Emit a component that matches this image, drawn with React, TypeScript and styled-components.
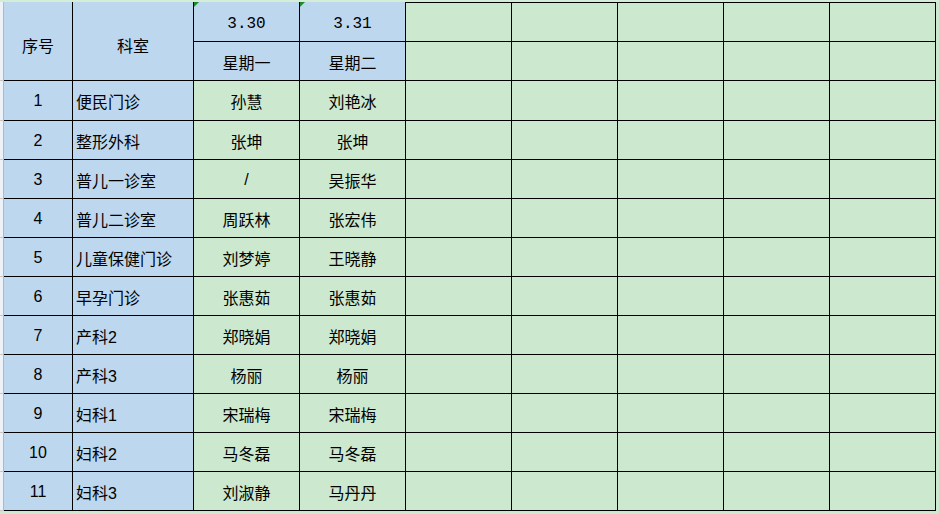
import { createGlobalStyle } from "styled-components";
import styled from "styled-components";

const GlobalStyle = createGlobalStyle`
  html, body {
    margin: 0;
    padding: 0;
    background: #cce8cf;
  }
  body {
    width: 939px;
    height: 514px;
    overflow: hidden;
    font-family: "Liberation Sans", "Noto Sans CJK SC", sans-serif;
    color: #000;
  }
`;

const BLUE = "#bdd7ee";
const GREEN = "#cce8cf";

const rows = [
  { no: "1", dept: "便民门诊", d1: "孙慧", d2: "刘艳冰" },
  { no: "2", dept: "整形外科", d1: "张坤", d2: "张坤" },
  { no: "3", dept: "普儿一诊室", d1: "/", d2: "吴振华" },
  { no: "4", dept: "普儿二诊室", d1: "周跃林", d2: "张宏伟" },
  { no: "5", dept: "儿童保健门诊", d1: "刘梦婷", d2: "王晓静" },
  { no: "6", dept: "早孕门诊", d1: "张惠茹", d2: "张惠茹" },
  { no: "7", dept: "产科2", d1: "郑晓娟", d2: "郑晓娟" },
  { no: "8", dept: "产科3", d1: "杨丽", d2: "杨丽" },
  { no: "9", dept: "妇科1", d1: "宋瑞梅", d2: "宋瑞梅" },
  { no: "10", dept: "妇科2", d1: "马冬磊", d2: "马冬磊" },
  { no: "11", dept: "妇科3", d1: "刘淑静", d2: "马丹丹" },
];

const EMPTY_COLS = 5;

const TopStrip = styled.div`
  height: 2px;
  background: #d4edd6;
`;

const Sheet = styled.div`
  display: grid;
  grid-template-columns: 4px 69px 121px repeat(7, 106px);
  grid-template-rows: 40px 39px 40px repeat(10, 39px);
`;

const Edge = styled.div<{ $span?: number }>`
  grid-row: span ${(p) => p.$span ?? 1};
  background: #eef2f6;
  border-right: 1px solid #b4b8bd;
  border-bottom: 1px solid #c4c8cc;
  box-sizing: border-box;
`;

const Cell = styled.div<{
  $bg: string;
  $span?: number;
  $align?: "left" | "center";
  $top?: boolean;
  $mono?: boolean;
  $flag?: boolean;
  $lift?: number;
}>`
  position: relative;
  grid-row: span ${(p) => p.$span ?? 1};
  box-sizing: border-box;
  background: ${(p) => p.$bg};
  border-right: 1px solid #000;
  border-bottom: 1px solid #000;
  border-top: ${(p) => (p.$top ? "1px solid #000" : "none")};
  display: flex;
  align-items: center;
  justify-content: ${(p) => (p.$align === "left" ? "flex-start" : "center")};
  padding-left: ${(p) => (p.$align === "left" ? "3px" : "0")};
  padding-top: ${(p) => p.$lift ?? 1}px;
  font-size: 16px;
  font-family: ${(p) =>
    p.$mono
      ? `"Liberation Mono", monospace`
      : `"Liberation Sans", "Noto Sans CJK SC", sans-serif`};
  white-space: nowrap;
  overflow: hidden;

  &::before {
    content: "";
    display: ${(p) => (p.$flag ? "block" : "none")};
    position: absolute;
    left: 0;
    top: 0;
    width: 0;
    height: 0;
    border-top: 5px solid #1e8a2e;
    border-right: 5px solid transparent;
  }
`;

export default function App() {
  return (
    <>
      <GlobalStyle />
      <TopStrip />
      <Sheet>
        <Edge $span={2} />
        <Cell $bg={BLUE} $span={2} $lift={8}>
          序号
        </Cell>
        <Cell $bg={BLUE} $span={2} $lift={8}>
          科室
        </Cell>
        <Cell $bg={BLUE} $mono $flag $lift={4}>
          3.30
        </Cell>
        <Cell $bg={BLUE} $mono $flag $lift={4}>
          3.31
        </Cell>
        {Array.from({ length: EMPTY_COLS }).map((_, i) => (
          <Cell key={`h1-${i}`} $bg={GREEN} $top />
        ))}
        <Cell $bg={BLUE}>星期一</Cell>
        <Cell $bg={BLUE}>星期二</Cell>
        {Array.from({ length: EMPTY_COLS }).map((_, i) => (
          <Cell key={`h2-${i}`} $bg={GREEN} />
        ))}

        {rows.map((r) => (
          <RowCells key={r.no} {...r} />
        ))}
      </Sheet>
    </>
  );
}

function RowCells({
  no,
  dept,
  d1,
  d2,
}: {
  no: string;
  dept: string;
  d1: string;
  d2: string;
}) {
  return (
    <>
      <Edge />
      <Cell $bg={BLUE}>{no}</Cell>
      <Cell $bg={BLUE} $align="left">
        {dept}
      </Cell>
      <Cell $bg={GREEN}>{d1}</Cell>
      <Cell $bg={GREEN}>{d2}</Cell>
      {Array.from({ length: EMPTY_COLS }).map((_, i) => (
        <Cell key={i} $bg={GREEN} />
      ))}
    </>
  );
}
